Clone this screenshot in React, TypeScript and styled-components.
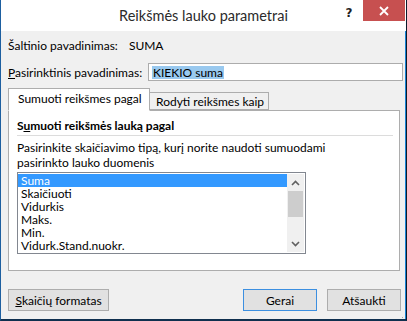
import React from "react";
import styled, { createGlobalStyle } from "styled-components";

const GlobalStyle = createGlobalStyle`
  html, body {
    margin: 0;
    padding: 0;
    background: #ffffff;
  }
  body {
    font-family: Lato, "Noto Sans", sans-serif;
    font-size: 12px;
    line-height: 15px;
    color: #000000;
  }
`;

const Functions = ["Suma", "Skaičiuoti", "Vidurkis", "Maks.", "Min.", "Vidurk.Stand.nuokr."];

const App = () => {
  return (
    <>
      <GlobalStyle />
      <Window>
        <TitleBar>
          <span />
          <Title>Reikšmės lauko parametrai</Title>
          <Controls>
            <HelpButton>?</HelpButton>
            <CloseButton aria-label="Uždaryti">
              <svg width="10" height="10" viewBox="0 0 10 10">
                <path d="M1 1 L9 9 M9 1 L1 9" stroke="#ffffff" strokeWidth="1.8" />
              </svg>
            </CloseButton>
          </Controls>
        </TitleBar>

        <Body>
          <InfoRow>
            <span>Šaltinio pavadinimas:</span>
            <span>SUMA</span>
          </InfoRow>

          <NameRow>
            <Label htmlFor="custom-name">
              <u>P</u>asirinktinis pavadinimas:
            </Label>
            <NameInput id="custom-name">
              <Selected>KIEKIO suma</Selected>
            </NameInput>
          </NameRow>

          <Tabs>
            <Tab $active $width={142}>
              Sumuoti reikšmes pagal
            </Tab>
            <Tab $width={119}>Rodyti reikšmes kaip</Tab>
          </Tabs>

          <Panel>
            <PanelHeading>
              S<u>u</u>muoti reikšmės lauką pagal
            </PanelHeading>
            <Separator />
            <Description>
              Pasirinkite skaičiavimo tipą, kurį norite naudoti sumuodami
              <br />
              pasirinkto lauko duomenis
            </Description>
            <ListBox>
              <Items>
                {Functions.map((fn, i) => (
                  <Item key={fn} $selected={i === 0}>
                    {fn}
                  </Item>
                ))}
              </Items>
              <ScrollBar>
                <Arrow>
                  <svg width="9" height="6" viewBox="0 0 9 6">
                    <path d="M1 5 L4.5 1.5 L8 5" stroke="#606060" strokeWidth="1.6" fill="none" />
                  </svg>
                </Arrow>
                <Track>
                  <Thumb />
                </Track>
                <Arrow>
                  <svg width="9" height="6" viewBox="0 0 9 6">
                    <path d="M1 1 L4.5 4.5 L8 1" stroke="#606060" strokeWidth="1.6" fill="none" />
                  </svg>
                </Arrow>
              </ScrollBar>
            </ListBox>
          </Panel>

          <ButtonRow>
            <Button $width={101}>
              <u>S</u>kaičių formatas
            </Button>
            <Spacer />
            <Button $default $width={74}>
              Gerai
            </Button>
            <Button $width={74}>Atšaukti</Button>
          </ButtonRow>
        </Body>
        <Grip>
          <svg width="7" height="7" viewBox="0 0 7 7">
            <g fill="#a8a8a8">
              <rect x="5" y="1" width="1" height="1" />
              <rect x="3" y="3" width="1" height="1" />
              <rect x="5" y="3" width="1" height="1" />
              <rect x="1" y="5" width="1" height="1" />
              <rect x="3" y="5" width="1" height="1" />
              <rect x="5" y="5" width="1" height="1" />
            </g>
          </svg>
        </Grip>
      </Window>
    </>
  );
};

const Window = styled.div`
  position: relative;
  width: 407px;
  height: 321px;
  box-sizing: border-box;
  display: flex;
  flex-direction: column;
  background: #f0f0f0;
  border-left: 1px solid #1d5fa0;
  border-right: 1px solid #0b1a2a;
  border-bottom: 2px solid #10304f;
  box-shadow: inset -1px 0 0 #1883d7;
  overflow: hidden;
`;

const TitleBar = styled.div`
  height: 31px;
  flex-shrink: 0;
  background: #ffffff;
  display: grid;
  grid-template-columns: 1fr auto 1fr;
  align-items: start;
`;

const Title = styled.div`
  font-size: 14.5px;
  line-height: 31px;
  color: #2b2b2b;
  white-space: nowrap;
`;

const Controls = styled.div`
  display: flex;
  justify-content: flex-end;
  align-items: flex-start;
  padding-right: 1px;
`;

const HelpButton = styled.div`
  width: 28px;
  height: 26px;
  font-family: "DejaVu Sans", sans-serif;
  font-weight: bold;
  font-size: 12px;
  line-height: 26px;
  text-align: center;
  color: #1f1f1f;
`;

const CloseButton = styled.div`
  width: 42px;
  height: 21px;
  background: #c75050;
  display: flex;
  align-items: center;
  justify-content: center;
`;

const Body = styled.div`
  flex: 1;
  display: flex;
  flex-direction: column;
  padding: 0 3px 0 7px;
`;

const InfoRow = styled.div`
  display: flex;
  gap: 11px;
  height: 16px;
  align-items: center;
  margin-top: 6px;
  white-space: nowrap;
`;

const NameRow = styled.div`
  display: flex;
  align-items: center;
  justify-content: space-between;
  margin-top: 10px;
  height: 18px;
`;

const Label = styled.label`
  white-space: nowrap;
`;

const NameInput = styled.div`
  width: 255px;
  height: 18px;
  box-sizing: border-box;
  background: #ffffff;
  border: 1px solid #acacac;
  display: flex;
  align-items: center;
  padding-left: 3px;
`;

const Selected = styled.span`
  background: #99c9ef;
  line-height: 13px;
  padding: 0 1px;
`;

const Tabs = styled.div`
  display: flex;
  align-items: flex-end;
  margin-top: 7px;
  height: 22px;
  flex-shrink: 0;
  position: relative;
  z-index: 1;
`;

const Tab = styled.div<{ $active?: boolean; $width: number }>`
  box-sizing: border-box;
  width: ${(p) => p.$width}px;
  height: ${(p) => (p.$active ? "23px" : "18px")};
  margin-bottom: ${(p) => (p.$active ? "-1px" : "0")};
  padding: ${(p) => (p.$active ? "0 0 2px 9px" : "0 0 0 6px")};
  display: flex;
  align-items: center;
  white-space: nowrap;
  background: ${(p) => (p.$active ? "#ffffff" : "#f0f0f0")};
  border: 1px solid #adadad;
  border-bottom-color: ${(p) => (p.$active ? "#ffffff" : "#adadad")};
  border-left-width: ${(p) => (p.$active ? "1px" : "0")};
`;

const Panel = styled.div`
  width: 392px;
  height: 161px;
  flex-shrink: 0;
  box-sizing: border-box;
  background: #ffffff;
  border: 1px solid #adadad;
  padding: 7px 6px 0 8px;
  display: flex;
  flex-direction: column;
`;

const PanelHeading = styled.div`
  font-weight: bold;
  line-height: 16px;
`;

const Separator = styled.div`
  height: 1px;
  background: #dcdcdc;
  margin: 1px 0 4px;
`;

const Description = styled.div`
  line-height: 15px;
  white-space: nowrap;
`;

const ListBox = styled.div`
  margin-top: 2px;
  width: 289px;
  height: 82px;
  box-sizing: border-box;
  border: 1px solid #828790;
  display: flex;
  padding: 1px 1px 1px 0;
`;

const Items = styled.div`
  flex: 1;
  display: flex;
  flex-direction: column;
`;

const Item = styled.div<{ $selected?: boolean }>`
  height: 13px;
  line-height: 13px;
  padding-left: 3px;
  white-space: nowrap;
  background: ${(p) => (p.$selected ? "#3399ff" : "transparent")};
  color: ${(p) => (p.$selected ? "#ffffff" : "#000000")};
`;

const ScrollBar = styled.div`
  width: 17px;
  background: #f0f0f0;
  display: flex;
  flex-direction: column;
`;

const Arrow = styled.div`
  height: 17px;
  display: flex;
  align-items: center;
  justify-content: center;
`;

const Track = styled.div`
  flex: 1;
`;

const Thumb = styled.div`
  height: 26px;
  margin: 0 1px;
  background: #cdcdcd;
`;

const ButtonRow = styled.div`
  display: flex;
  gap: 10px;
  margin-top: 18px;
  padding-right: 2px;
`;

const Spacer = styled.div`
  flex: 1;
`;

const Button = styled.div<{ $default?: boolean; $width: number }>`
  width: ${(p) => p.$width}px;
  height: 22px;
  box-sizing: border-box;
  display: flex;
  align-items: center;
  justify-content: center;
  white-space: nowrap;
  background: #e1e1e1;
  border: 1px solid ${(p) => (p.$default ? "#3c8fe0" : "#adadad")};
`;

const Grip = styled.div`
  position: absolute;
  right: 2px;
  bottom: 1px;
  width: 7px;
  height: 7px;
`;

export default App;
